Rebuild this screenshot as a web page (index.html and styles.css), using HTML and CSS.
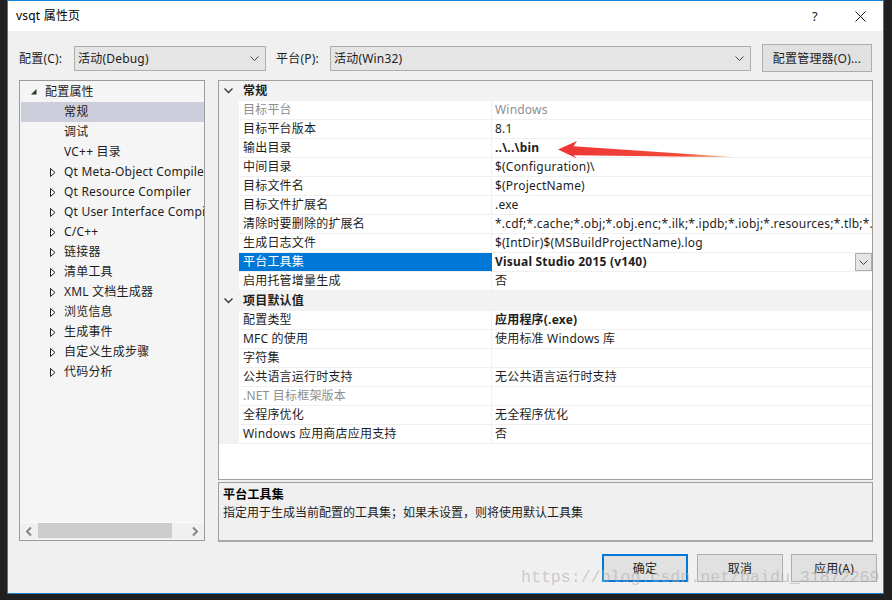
FILE: index.html
```html
<!DOCTYPE html>
<html>
<head>
<meta charset="utf-8">
<title>vsqt 属性页</title>
<link rel="stylesheet" href="styles.css">
</head>
<body>
<div class="screen">
  <div class="dialog">
    <div class="titlebar">
      <span class="title">vsqt 属性页</span>
      <span class="tb-help">?</span>
      <svg class="tb-close" width="11" height="11" viewBox="0 0 11 11"><path d="M0.5 0.5 L10.5 10.5 M10.5 0.5 L0.5 10.5" stroke="#1a1a1a" stroke-width="1" fill="none"/></svg>
    </div>

    <div class="configrow">
      <span class="lbl lbl-c">配置(C):</span>
      <div class="combo combo-c"><span class="combo-text">活动(Debug)</span><svg class="chev" width="9" height="5" viewBox="0 0 9 5"><path d="M0.5 0.5 L4.5 4.5 L8.5 0.5" stroke="#444" fill="none"/></svg></div>
      <span class="lbl lbl-p">平台(P):</span>
      <div class="combo combo-p"><span class="combo-text">活动(Win32)</span><svg class="chev" width="9" height="5" viewBox="0 0 9 5"><path d="M0.5 0.5 L4.5 4.5 L8.5 0.5" stroke="#444" fill="none"/></svg></div>
      <button class="btn btn-mgr">配置管理器(O)...</button>
    </div>

    <div class="main">
      <div class="tree">
        <ul class="tree-list">
          <li class="ti l0"><span class="exp"><svg width="6" height="6" viewBox="0 0 6 6"><path d="M5.5 0 V5.5 H0 Z" fill="#333"/></svg></span>配置属性</li>
          <li class="ti l1 sel"><span class="exp"></span>常规</li>
          <li class="ti l1"><span class="exp"></span>调试</li>
          <li class="ti l1"><span class="exp"></span>VC++ 目录</li>
          <li class="ti l1"><span class="exp"><svg width="6" height="9" viewBox="0 0 6 9"><path d="M0.5 0.5 L5 4.5 L0.5 8.5 Z" fill="none" stroke="#222"/></svg></span>Qt Meta-Object Compiler</li>
          <li class="ti l1"><span class="exp"><svg width="6" height="9" viewBox="0 0 6 9"><path d="M0.5 0.5 L5 4.5 L0.5 8.5 Z" fill="none" stroke="#222"/></svg></span>Qt Resource Compiler</li>
          <li class="ti l1"><span class="exp"><svg width="6" height="9" viewBox="0 0 6 9"><path d="M0.5 0.5 L5 4.5 L0.5 8.5 Z" fill="none" stroke="#222"/></svg></span>Qt User Interface Compiler</li>
          <li class="ti l1"><span class="exp"><svg width="6" height="9" viewBox="0 0 6 9"><path d="M0.5 0.5 L5 4.5 L0.5 8.5 Z" fill="none" stroke="#222"/></svg></span>C/C++</li>
          <li class="ti l1"><span class="exp"><svg width="6" height="9" viewBox="0 0 6 9"><path d="M0.5 0.5 L5 4.5 L0.5 8.5 Z" fill="none" stroke="#222"/></svg></span>链接器</li>
          <li class="ti l1"><span class="exp"><svg width="6" height="9" viewBox="0 0 6 9"><path d="M0.5 0.5 L5 4.5 L0.5 8.5 Z" fill="none" stroke="#222"/></svg></span>清单工具</li>
          <li class="ti l1"><span class="exp"><svg width="6" height="9" viewBox="0 0 6 9"><path d="M0.5 0.5 L5 4.5 L0.5 8.5 Z" fill="none" stroke="#222"/></svg></span>XML 文档生成器</li>
          <li class="ti l1"><span class="exp"><svg width="6" height="9" viewBox="0 0 6 9"><path d="M0.5 0.5 L5 4.5 L0.5 8.5 Z" fill="none" stroke="#222"/></svg></span>浏览信息</li>
          <li class="ti l1"><span class="exp"><svg width="6" height="9" viewBox="0 0 6 9"><path d="M0.5 0.5 L5 4.5 L0.5 8.5 Z" fill="none" stroke="#222"/></svg></span>生成事件</li>
          <li class="ti l1"><span class="exp"><svg width="6" height="9" viewBox="0 0 6 9"><path d="M0.5 0.5 L5 4.5 L0.5 8.5 Z" fill="none" stroke="#222"/></svg></span>自定义生成步骤</li>
          <li class="ti l1"><span class="exp"><svg width="6" height="9" viewBox="0 0 6 9"><path d="M0.5 0.5 L5 4.5 L0.5 8.5 Z" fill="none" stroke="#222"/></svg></span>代码分析</li>
        </ul>
        <div class="hscroll">
          <span class="sarr"><svg width="6" height="9" viewBox="0 0 6 9"><path d="M5 0.5 L1 4.5 L5 8.5" stroke="#858585" stroke-width="2" fill="none"/></svg></span>
          <div class="track"><div class="thumb"></div></div>
          <span class="sarr"><svg width="6" height="9" viewBox="0 0 6 9"><path d="M1 0.5 L5 4.5 L1 8.5" stroke="#858585" stroke-width="2" fill="none"/></svg></span>
        </div>
      </div>

      <div class="rightcol">
        <div class="grid">
          <div class="cat"><span class="cat-exp"><svg width="9" height="6" viewBox="0 0 9 6"><path d="M0.5 0.5 L4.5 4.5 L8.5 0.5" stroke="#333" stroke-width="1.3" fill="none"/></svg></span><span class="cat-name">常规</span></div>
          <div class="prop dis"><div class="pm"></div><div class="pn">目标平台</div><div class="pv">Windows</div></div>
          <div class="prop"><div class="pm"></div><div class="pn">目标平台版本</div><div class="pv">8.1</div></div>
          <div class="prop"><div class="pm"></div><div class="pn">输出目录</div><div class="pv b">..\..\bin</div></div>
          <div class="prop"><div class="pm"></div><div class="pn">中间目录</div><div class="pv">$(Configuration)\</div></div>
          <div class="prop"><div class="pm"></div><div class="pn">目标文件名</div><div class="pv">$(ProjectName)</div></div>
          <div class="prop"><div class="pm"></div><div class="pn">目标文件扩展名</div><div class="pv">.exe</div></div>
          <div class="prop"><div class="pm"></div><div class="pn">清除时要删除的扩展名</div><div class="pv">*.cdf;*.cache;*.obj;*.obj.enc;*.ilk;*.ipdb;*.iobj;*.resources;*.tlb;*.tli;*.tlh;*.tmp;*.rsp;*.pgc;*.pgd;*.meta;*.tlog</div></div>
          <div class="prop"><div class="pm"></div><div class="pn">生成日志文件</div><div class="pv">$(IntDir)$(MSBuildProjectName).log</div></div>
          <div class="prop sel"><div class="pm"></div><div class="pn">平台工具集</div><div class="pv b">Visual Studio 2015 (v140)<span class="dd"><svg width="9" height="5" viewBox="0 0 9 5"><path d="M0.5 0.5 L4.5 4.5 L8.5 0.5" stroke="#444" fill="none"/></svg></span></div></div>
          <div class="prop"><div class="pm"></div><div class="pn">启用托管增量生成</div><div class="pv">否</div></div>
          <div class="cat"><span class="cat-exp"><svg width="9" height="6" viewBox="0 0 9 6"><path d="M0.5 0.5 L4.5 4.5 L8.5 0.5" stroke="#333" stroke-width="1.3" fill="none"/></svg></span><span class="cat-name">项目默认值</span></div>
          <div class="prop"><div class="pm"></div><div class="pn">配置类型</div><div class="pv b">应用程序(.exe)</div></div>
          <div class="prop"><div class="pm"></div><div class="pn">MFC 的使用</div><div class="pv">使用标准 Windows 库</div></div>
          <div class="prop"><div class="pm"></div><div class="pn">字符集</div><div class="pv"></div></div>
          <div class="prop"><div class="pm"></div><div class="pn">公共语言运行时支持</div><div class="pv">无公共语言运行时支持</div></div>
          <div class="prop dis"><div class="pm"></div><div class="pn">.NET 目标框架版本</div><div class="pv"></div></div>
          <div class="prop"><div class="pm"></div><div class="pn">全程序优化</div><div class="pv">无全程序优化</div></div>
          <div class="prop"><div class="pm"></div><div class="pn">Windows 应用商店应用支持</div><div class="pv">否</div></div>
        </div>
        <div class="desc">
          <div class="desc-title">平台工具集</div>
          <div class="desc-text">指定用于生成当前配置的工具集；如果未设置，则将使用默认工具集</div>
        </div>
      </div>
    </div>

    <div class="buttons">
      <button class="btn btn-ok">确定</button>
      <button class="btn btn-cancel">取消</button>
      <button class="btn btn-apply">应用(A)</button>
    </div>
  </div>

  <svg class="redarrow" width="892" height="600" viewBox="0 0 892 600">
    <defs>
      <linearGradient id="ag" x1="558" y1="0" x2="736" y2="0" gradientUnits="userSpaceOnUse">
        <stop offset="0" stop-color="#ee3535"/>
        <stop offset="0.7" stop-color="#f04a3a"/>
        <stop offset="0.88" stop-color="#f6a070"/>
        <stop offset="1" stop-color="#fbd0b0"/>
      </linearGradient>
    </defs>
    <polygon points="558,149.5 577,141 573.5,146.3 736,157.3 573.5,155.3 577,158.5" fill="url(#ag)"/>
  </svg>
  <div class="watermark">https://blog.csdn.net/baidu_31872269</div>
</div>
</body>
</html>
```

FILE: styles.css
```css
* {
  box-sizing: border-box;
  margin: 0;
  padding: 0;
}

html, body {
  width: 892px;
  height: 600px;
  overflow: hidden;
}

body {
  background: #1f1f1f;
  font-family: "Noto Sans", "Noto Sans CJK SC", sans-serif;
  font-size: 12px;
  letter-spacing: 0.2px;
  color: #1e1e1e;
}

.screen {
  position: relative;
  width: 892px;
  height: 600px;
  background: #202022;
}

.dialog {
  margin-left: 7px;
  width: 877px;
  height: 594px;
  border: 1px solid #1883d7;
  background: #f0f0f0;
  display: flex;
  flex-direction: column;
}

/* title bar */
.titlebar {
  height: 30px;
  flex: none;
  background: #fff;
  display: flex;
  align-items: center;
  padding-left: 8px;
  padding-right: 17px;
}

.title {
  flex: 1;
  color: #000;
  line-height: 30px;
}

.tb-help {
  font-size: 13px;
  color: #1a1a1a;
  width: 8px;
  margin-right: 35px;
  line-height: 30px;
}

.tb-close {
  display: block;
  margin-top: 1px;
}

/* configuration row */
.configrow {
  margin-top: 13px;
  height: 28px;
  flex: none;
  display: flex;
  align-items: center;
  padding-left: 11px;
}

.lbl {
  color: #1e1e1e;
  line-height: 25px;
}

.lbl-c { width: 55px; }
.lbl-p { width: 54px; margin-left: 10px; }

.combo {
  height: 25px;
  background: #e5e5e5;
  border: 1px solid #adadad;
  display: flex;
  align-items: center;
  padding-left: 3px;
  padding-right: 6px;
}

.combo-c { width: 192px; }
.combo-p { width: 421px; }

.combo-text {
  flex: 1;
  line-height: 23px;
}

.chev {
  display: block;
}

.btn {
  font-family: "Noto Sans", "Noto Sans CJK SC", sans-serif;
  font-size: 12px;
  letter-spacing: 0.2px;
  color: #1e1e1e;
  background: #e1e1e1;
  border: 1px solid #adadad;
  height: 28px;
}

.btn-mgr {
  width: 110px;
  margin-left: 11px;
}

/* main area */
.main {
  margin-top: 8px;
  height: 462px;
  flex: none;
  display: flex;
  padding-left: 11px;
  padding-right: 10px;
  gap: 13px;
}

.tree {
  width: 186px;
  height: 461px;
  border: 1px solid #9a9a9a;
  background: #f5f5f5;
  display: flex;
  flex-direction: column;
  padding-left: 1px;
}

.tree-list {
  list-style: none;
  flex: 1;
  padding-top: 1px;
  overflow: hidden;
}

.ti {
  height: 20px;
  line-height: 20px;
  display: flex;
  align-items: center;
  white-space: nowrap;
  overflow: hidden;
  color: #1e1e1e;
}

.ti.l1 { padding-left: 19px; }

.ti.sel { background: #cccedb; }

.exp {
  width: 24px;
  flex: none;
  display: flex;
  align-items: center;
  padding-left: 10px;
  height: 20px;
}

.exp svg { display: block; }
.ti.l1 .exp svg { margin-top: 1px; }

.hscroll {
  height: 17px;
  margin-bottom: 1px;
  margin-left: -1px;
  border-top: 1px solid #fafafa;
  background: #f0f0f0;
  display: flex;
  align-items: center;
}

.sarr {
  width: 18px;
  height: 16px;
  display: flex;
  align-items: center;
  justify-content: center;
  flex: none;
}

.track {
  flex: 1;
  height: 16px;
}

.thumb {
  width: 134px;
  height: 15px;
  background: #cdcdcd;
}

/* property grid */
.rightcol {
  width: 655px;
  display: flex;
  flex-direction: column;
  gap: 2px;
}

.grid {
  height: 400px;
  flex: none;
  border: 1px solid #a0a0a0;
  background: #fff;
  overflow: hidden;
}

.cat {
  height: 20px;
  display: flex;
  align-items: center;
  background: #f2f2f2;
}

.cat-exp {
  width: 20px;
  flex: none;
  padding-left: 5px;
  display: flex;
  align-items: center;
}

.cat-exp svg { display: block; }

.cat-name {
  padding-left: 4px;
  font-weight: bold;
  line-height: 20px;
  color: #1e1e1e;
}

.prop {
  height: 19px;
  display: flex;
}

.pm {
  width: 20px;
  flex: none;
  background: #f2f2f2;
}

.pn {
  width: 252px;
  flex: none;
  padding-left: 4px;
  line-height: 18px;
  border-bottom: 1px solid #f0f0f0;
  white-space: nowrap;
  overflow: hidden;
  color: #1e1e1e;
}

.pv {
  flex: 1;
  min-width: 0;
  padding-left: 3px;
  line-height: 18px;
  border-left: 1px solid #f0f0f0;
  border-bottom: 1px solid #f0f0f0;
  white-space: nowrap;
  overflow: hidden;
  position: relative;
  color: #1e1e1e;
}

.pv.b { font-weight: bold; }

.prop.dis .pn,
.prop.dis .pv { color: #8e8e8e; }

.prop.sel .pn {
  background: #0078d7;
  color: #fff;
}

.prop.sel .pv { border-left-color: #0078d7; }

.dd {
  position: absolute;
  right: 0;
  top: 0;
  width: 17px;
  height: 18px;
  background: #e6e6e6;
  border: 1px solid #adadad;
  display: flex;
  align-items: center;
  justify-content: center;
}

/* description panel */
.desc {
  height: 60px;
  flex: none;
  border: 1px solid #a0a0a0;
  border-bottom: 2px solid #a8a8a8;
  background: #f0f0f0;
  padding-left: 4px;
  padding-top: 3px;
}

.desc-title {
  font-weight: bold;
  line-height: 18px;
  color: #000;
}

.desc-text {
  line-height: 18px;
  letter-spacing: 0;
  color: #1e1e1e;
}

/* bottom buttons */
.buttons {
  margin-top: 12px;
  height: 28px;
  flex: none;
  display: flex;
  justify-content: flex-end;
  padding-right: 6px;
}

.btn-ok {
  width: 86px;
  border: 2px solid #0078d7;
}

.btn-cancel {
  width: 86px;
  margin-left: 9px;
}

.btn-apply {
  width: 86px;
  margin-left: 8px;
}

/* overlays */
.redarrow {
  position: absolute;
  left: 0;
  top: 0;
  pointer-events: none;
}

.watermark {
  position: absolute;
  left: 521px;
  top: 568px;
  font-family: "Liberation Mono", monospace;
  font-size: 16.6px;
  line-height: 20px;
  letter-spacing: 0;
  color: rgba(170, 170, 170, 0.55);
  white-space: nowrap;
  pointer-events: none;
}
```
